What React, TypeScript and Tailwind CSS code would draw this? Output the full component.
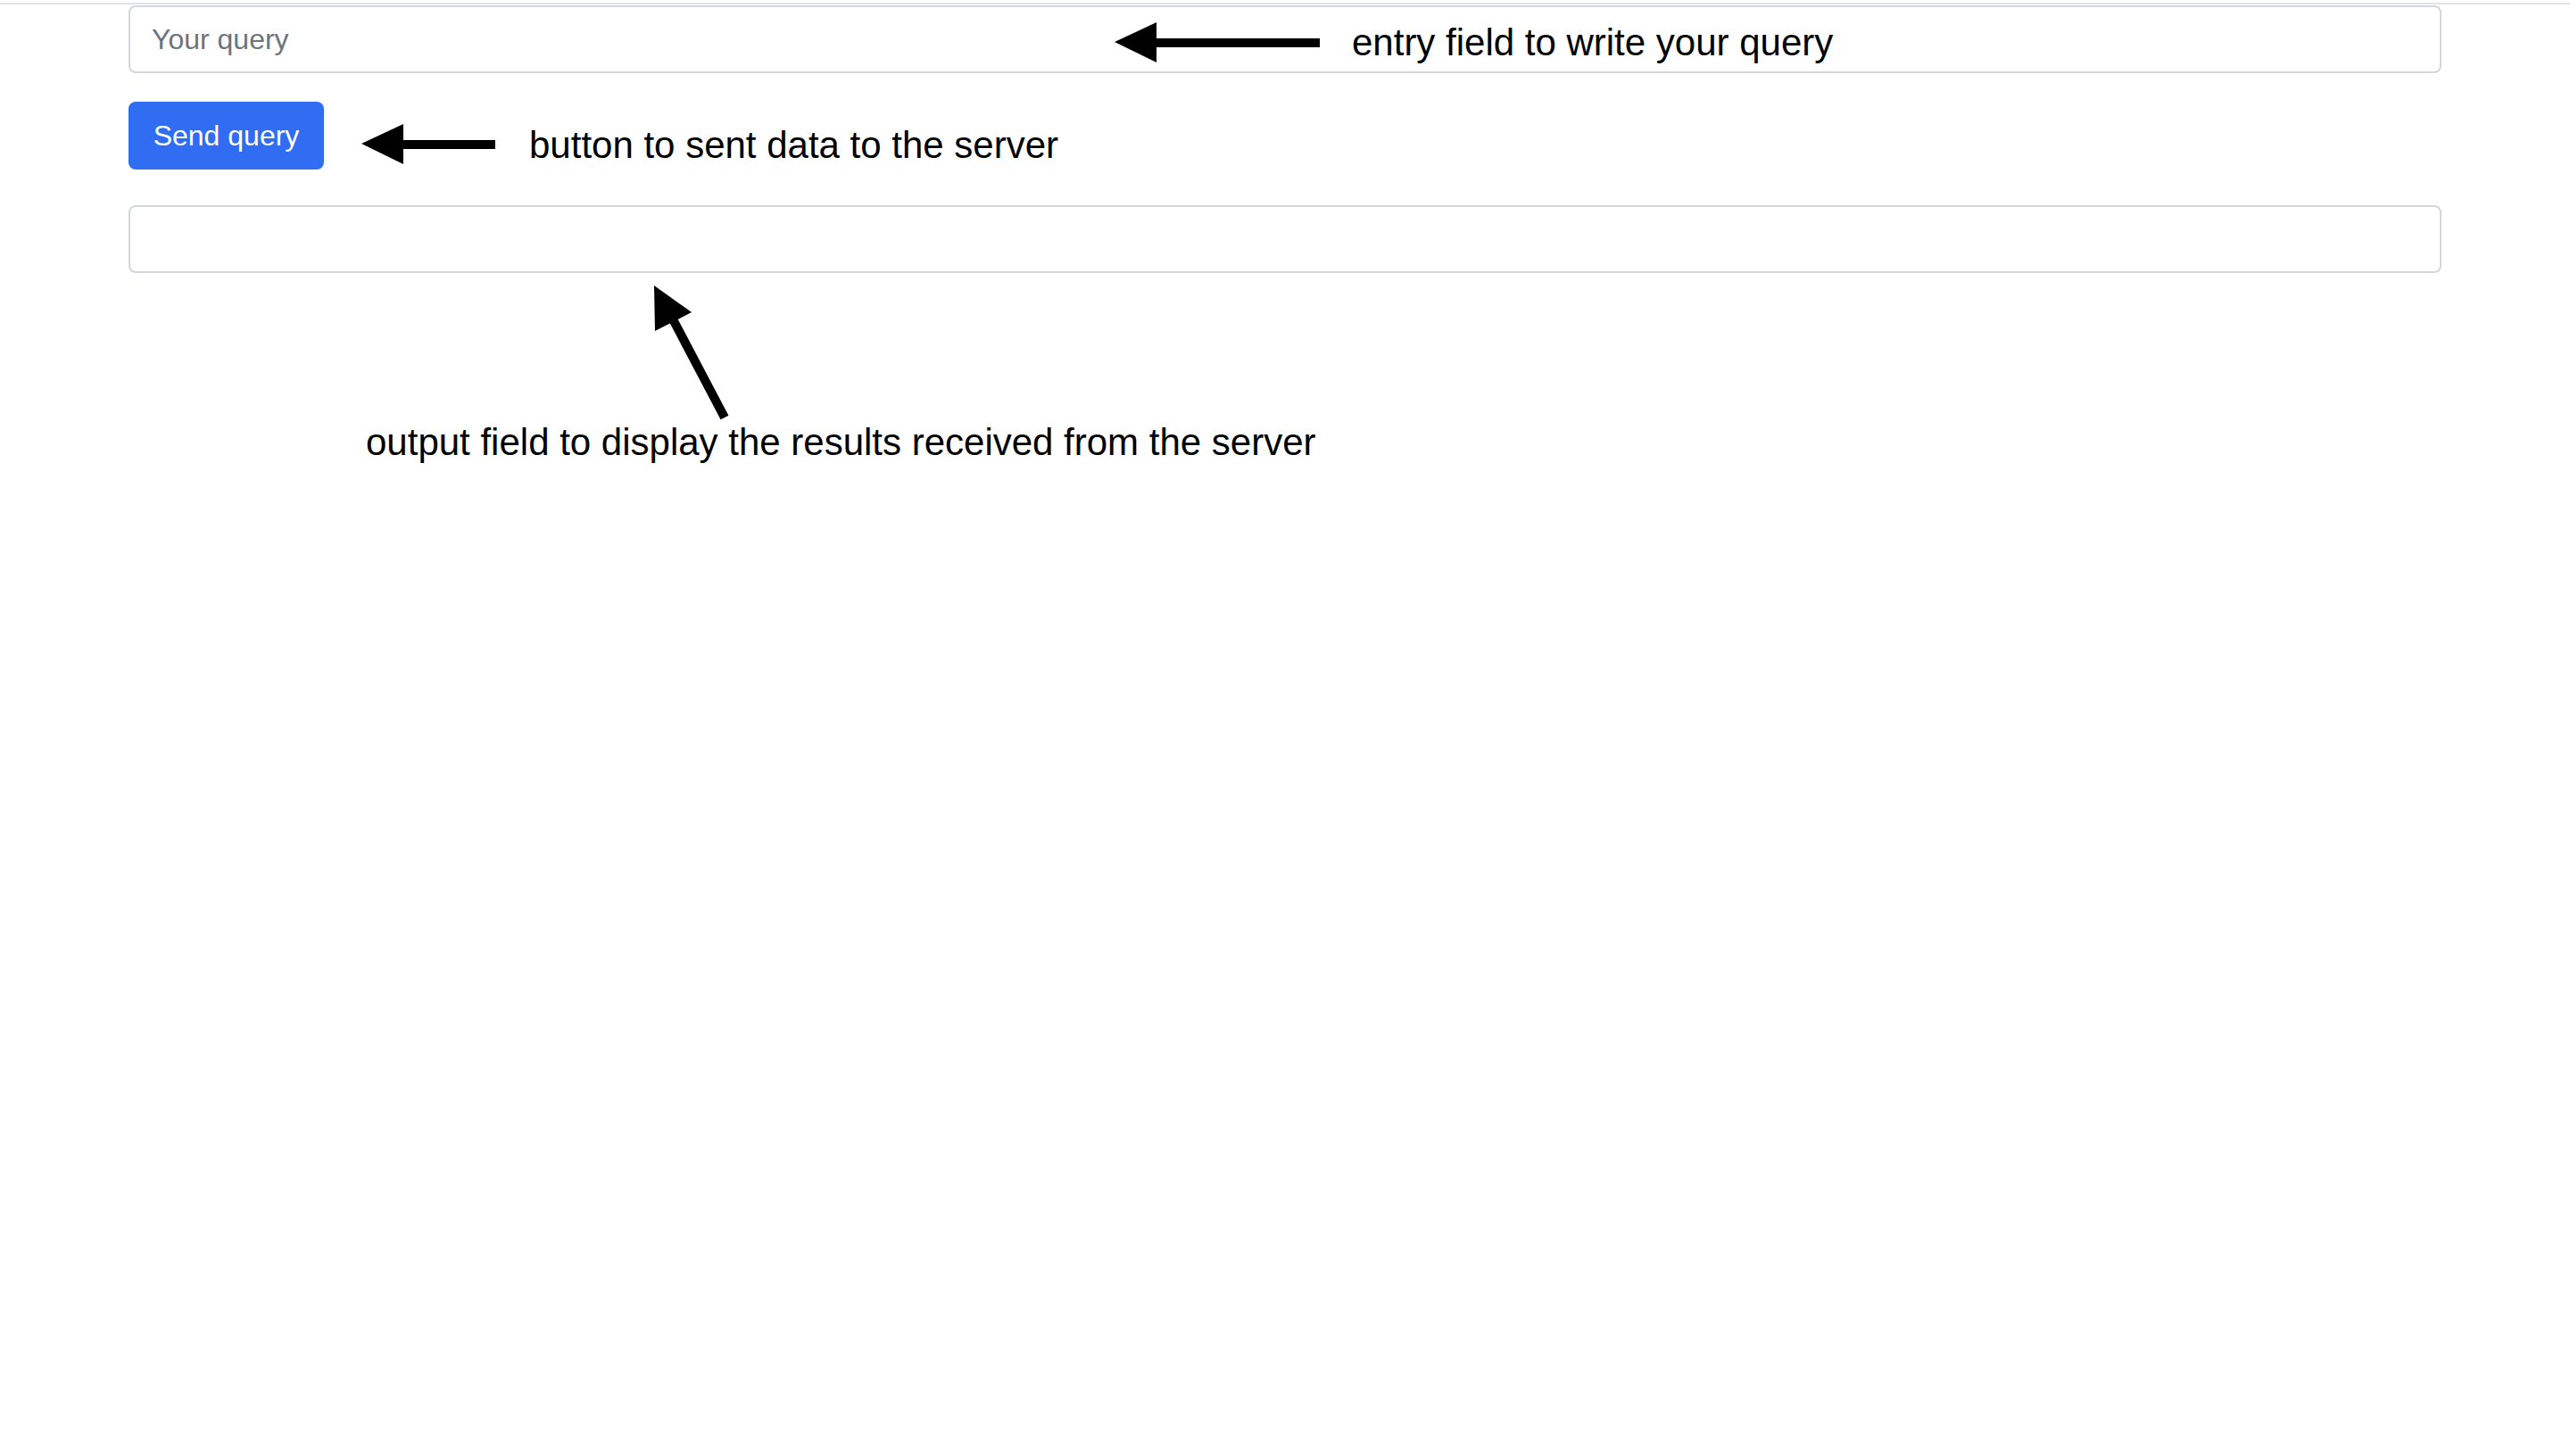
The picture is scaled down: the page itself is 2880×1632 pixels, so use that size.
import * as React from "react";

function LeftArrow({ width }: { width: number }) {
  // head is 47px long and 46px tall, shaft 10px thick
  return (
    <svg width={width} height="48" viewBox={`0 0 ${width} 48`} className="shrink-0">
      <rect x="45" y="19" width={width - 45} height="10" fill="#000" />
      <polygon points="0,23 47,1 47,46" fill="#000" />
    </svg>
  );
}

function UpArrow() {
  return (
    <svg width="92" height="156" viewBox="0 0 92 156" className="block">
      <line x1="84" y1="150" x2="24" y2="36" stroke="#000" strokeWidth="10" />
      <polygon points="5,2 6,53 47,32" fill="#000" />
    </svg>
  );
}

export default function App() {
  const [query, setQuery] = React.useState("");
  const [result, setResult] = React.useState("");

  return (
    <div className="min-h-screen bg-white font-['Liberation_Sans',Arial,sans-serif] text-black">
      <div className="pt-[3px]">
        <div className="h-[2px] bg-[#e2e3e5]" />
      </div>

      <div className="mx-auto w-[2592px] pt-px">
        {/* Query input */}
        <div className="relative">
          <input
            value={query}
            onChange={(e) => setQuery(e.target.value)}
            placeholder="Your query"
            className="block h-[76px] w-full rounded-[8px] border-2 border-[#d3d6da] bg-white px-6 text-[32px] text-[#212529] outline-none placeholder:text-[#6c757d]"
          />
          <div className="pointer-events-none absolute left-[1105px] top-[18px] flex items-center gap-[36px]">
            <LeftArrow width={230} />
            <span className="text-[42px] leading-[48px]">entry field to write your query</span>
          </div>
        </div>

        {/* Send button */}
        <div className="mt-8 flex items-start">
          <button
            onClick={() => setResult(query)}
            className="h-[76px] w-[219px] shrink-0 rounded-[8px] bg-[#316df3] text-[32px] text-white"
          >
            Send query
          </button>
          <div className="ml-[42px] mt-[23px] flex items-center gap-[38px]">
            <LeftArrow width={150} />
            <span className="mt-[2px] text-[42px] leading-[48px]">button to sent data to the server</span>
          </div>
        </div>

        {/* Output */}
        <div className="mt-10 h-[76px] w-full rounded-[8px] border-2 border-[#d3d6da] px-6 text-[32px] leading-[72px] text-[#212529]">
          {result}
        </div>

        <div className="mt-3">
          <div className="ml-[584px]">
            <UpArrow />
          </div>
          <p className="ml-[266px] -mt-[2px] text-[42px] leading-[48px]">
            output field to display the results received from the server
          </p>
        </div>
      </div>
    </div>
  );
}
